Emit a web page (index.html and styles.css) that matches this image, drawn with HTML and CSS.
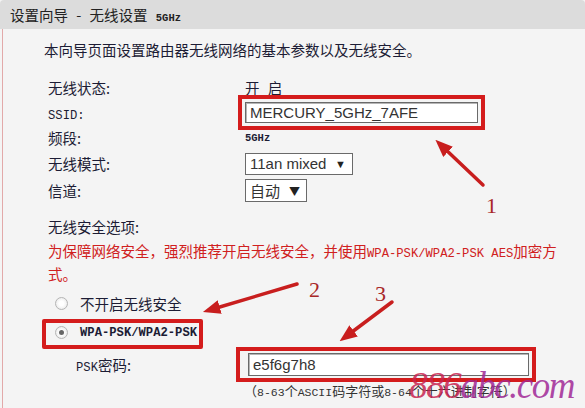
FILE: index.html
```html
<!DOCTYPE html>
<html lang="zh-CN">
<head>
    <meta charset="UTF-8">
    <title>设置向导 - 无线设置 5GHz</title>
    <link rel="stylesheet" href="styles.css">
</head>
<body>
    <div class="title-bar">设置向导 - 无线设置 <span class="sb small">5GHz</span></div>
    <div class="panel">
        <p class="intro">本向导页面设置路由器无线网络的基本参数以及无线安全。</p>

        <div class="row">
            <span class="label">无线状态:</span>
            <span class="value spaced">开 启</span>
        </div>
        <div class="row">
            <span class="label"><span class="sb">SSID:</span></span>
            <input class="text-input ssid" type="text" value="MERCURY_5GHz_7AFE">
        </div>
        <div class="row">
            <span class="label">频段:</span>
            <span class="sb small">5GHz</span>
        </div>
        <div class="row tall">
            <span class="label">无线模式:</span>
            <span class="select mode">11an mixed <i class="caret">▼</i></span>
        </div>
        <div class="row tall">
            <span class="label">信道:</span>
            <span class="select channel">自动 <i class="caret">▼</i></span>
        </div>

        <div class="section-title">无线安全选项:</div>
        <p class="warning">为保障网络安全，强烈推荐开启无线安全，并使用<span class="sb">WPA-PSK/WPA2-PSK AES</span>加密方<br>式。</p>

        <div class="radio-row">
            <span class="radio"></span>
            <span>不开启无线安全</span>
        </div>
        <div class="radio-row marked">
            <span class="radio checked"></span>
            <span class="sb bold">WPA-PSK/WPA2-PSK</span>
        </div>

        <div class="row psk">
            <span class="label"><span class="sb">PSK</span>密码:</span>
            <span class="mark-box"><input class="text-input key" type="text" value="e5f6g7h8"></span>
        </div>
        <div class="hint">（<span class="sb">8-63</span>个<span class="sb">ASCII</span>码字符或<span class="sb">8-64</span>个十六进制字符）</div>
    </div>

    <!-- annotations drawn over the screenshot -->
    <svg class="notes" width="585" height="408" viewBox="0 0 585 408">
        <defs>
            <marker id="head" markerWidth="5" markerHeight="4" refX="2" refY="2" orient="auto">
                <path d="M0,0 L5,2 L0,4 z" fill="#c81e1e"/>
            </marker>
        </defs>
        <line x1="483" y1="185" x2="443" y2="147" marker-end="url(#head)"/>
        <line x1="297" y1="284" x2="213" y2="309" marker-end="url(#head)"/>
        <line x1="392" y1="302" x2="348" y2="335" marker-end="url(#head)"/>
        <text x="486" y="213">1</text>
        <text x="309" y="297">2</text>
        <text x="375" y="301">3</text>
    </svg>
    <div class="watermark"><span class="wm-num">886</span><span class="wm-txt">abc.com</span></div>
</body>
</html>
```

FILE: styles.css
```css
body {
    margin: 0;
    width: 585px;
    height: 408px;
    overflow: hidden;
    position: relative;
    background-color: #f4f4f4;
    color: #1c1c34;
    font-family: 'Noto Sans CJK SC', sans-serif;
    font-size: 14.5px;
}
.sb {
    font-family: 'Liberation Mono', monospace;
    font-size: 12.2px;
}
.small {
    font-size: 10.5px;
    font-weight: bold;
}
.bold {
    font-weight: bold;
}
.title-bar {
    height: 29px;
    line-height: 29px;
    padding-left: 10px;
    background-color: #dcdcdc;
    border-radius: 4px 4px 0 0;
    font-size: 14.5px;
    word-spacing: 5px;
    color: #222;
}
.panel {
    margin-left: 2px;
    height: 379px;
    border-left: 1px solid #e2a9a9;
    padding: 11px 22px 0 41px;
    box-sizing: border-box;
}
.intro {
    margin: 0 0 15px;
    line-height: 20px;
}
.row {
    display: flex;
    align-items: center;
    height: 25px;
    padding-left: 4px;
}
.row.tall {
    height: 27px;
}
.label {
    width: 197px;
    flex-shrink: 0;
}
.spaced {
    word-spacing: 5px;
}
.text-input {
    height: 21px;
    box-sizing: border-box;
    padding: 0 4px;
    border: 1px solid #6a6a6a;
    box-shadow: inset 1px 1px 0 #b5b5b5;
    background: #fff;
    font-family: 'Liberation Sans', Arial, sans-serif;
    font-size: 15px;
    color: #333;
}
.ssid {
    width: 233px;
    outline: 4px solid #d41c1c;
    outline-offset: 3px;
}
.select {
    display: inline-flex;
    align-items: center;
    justify-content: space-between;
    height: 22px;
    box-sizing: border-box;
    padding: 0 6px 0 4px;
    border: 1px solid #6a6a6a;
    background: #fff;
    font-family: 'Liberation Sans', Arial, sans-serif;
    font-size: 15px;
    color: #333;
}
.select.mode {
    width: 108px;
}
.select.channel {
    width: 62px;
    height: 23px;
    font-family: 'Noto Sans CJK SC', sans-serif;
}
.caret {
    font-style: normal;
    font-size: 11px;
    color: #222;
}
.section-title {
    margin-top: 13px;
    line-height: 20px;
    padding-left: 4px;
}
.warning {
    margin: 4px 0 0;
    padding-left: 4px;
    line-height: 20px;
    white-space: nowrap;
    color: #d02020;
}
.radio-row {
    display: flex;
    align-items: center;
    gap: 12px;
    height: 29px;
    margin-top: 5px;
    padding-left: 11px;
    white-space: nowrap;
}
.radio-row.marked {
    width: 161px;
    height: 30px;
    box-sizing: border-box;
    margin-top: 1px;
    margin-left: -2px;
    padding-left: 9px;
    padding-bottom: 3px;
    border: 4px solid #d41c1c;
    border-radius: 2px;
}
.radio {
    width: 13px;
    height: 13px;
    flex-shrink: 0;
    box-sizing: border-box;
    border: 1px solid #b4b4b4;
    border-radius: 50%;
    background: radial-gradient(circle, #fff 30%, #e2e2e2);
    display: flex;
    align-items: center;
    justify-content: center;
}
.radio.checked::after {
    content: "";
    width: 5px;
    height: 5px;
    border-radius: 50%;
    background: #666;
}
.row.psk {
    height: 30px;
    padding-left: 32px;
}
.row.psk .label {
    width: 172px;
}
.mark-box {
    display: inline-block;
    margin-left: -12px;
    padding: 2px 3px 2px 8px;
    border: 4px solid #d41c1c;
    line-height: 0;
}
.key {
    width: 281px;
    height: 23px;
}
.hint {
    margin-top: 2px;
    padding-left: 200px;
    line-height: 20px;
    font-size: 13px;
    color: #333;
}
.hint .sb {
    font-size: 11.5px;
}
.notes {
    position: absolute;
    left: 0;
    top: 0;
    pointer-events: none;
}
.notes line {
    stroke: #c81e1e;
    stroke-width: 3.5;
    stroke-linecap: round;
}
.notes text {
    font-family: 'Liberation Serif', serif;
    font-size: 22px;
    fill: #a82828;
}
.watermark {
    position: absolute;
    right: 11px;
    bottom: 4px;
    font-family: 'Liberation Serif', serif;
    font-style: italic;
    font-size: 37px;
    line-height: 1;
    letter-spacing: -1.5px;
}
.wm-num {
    color: rgba(200, 36, 80, 0.85);
}
.wm-txt {
    color: rgba(160, 40, 150, 0.85);
}
```
